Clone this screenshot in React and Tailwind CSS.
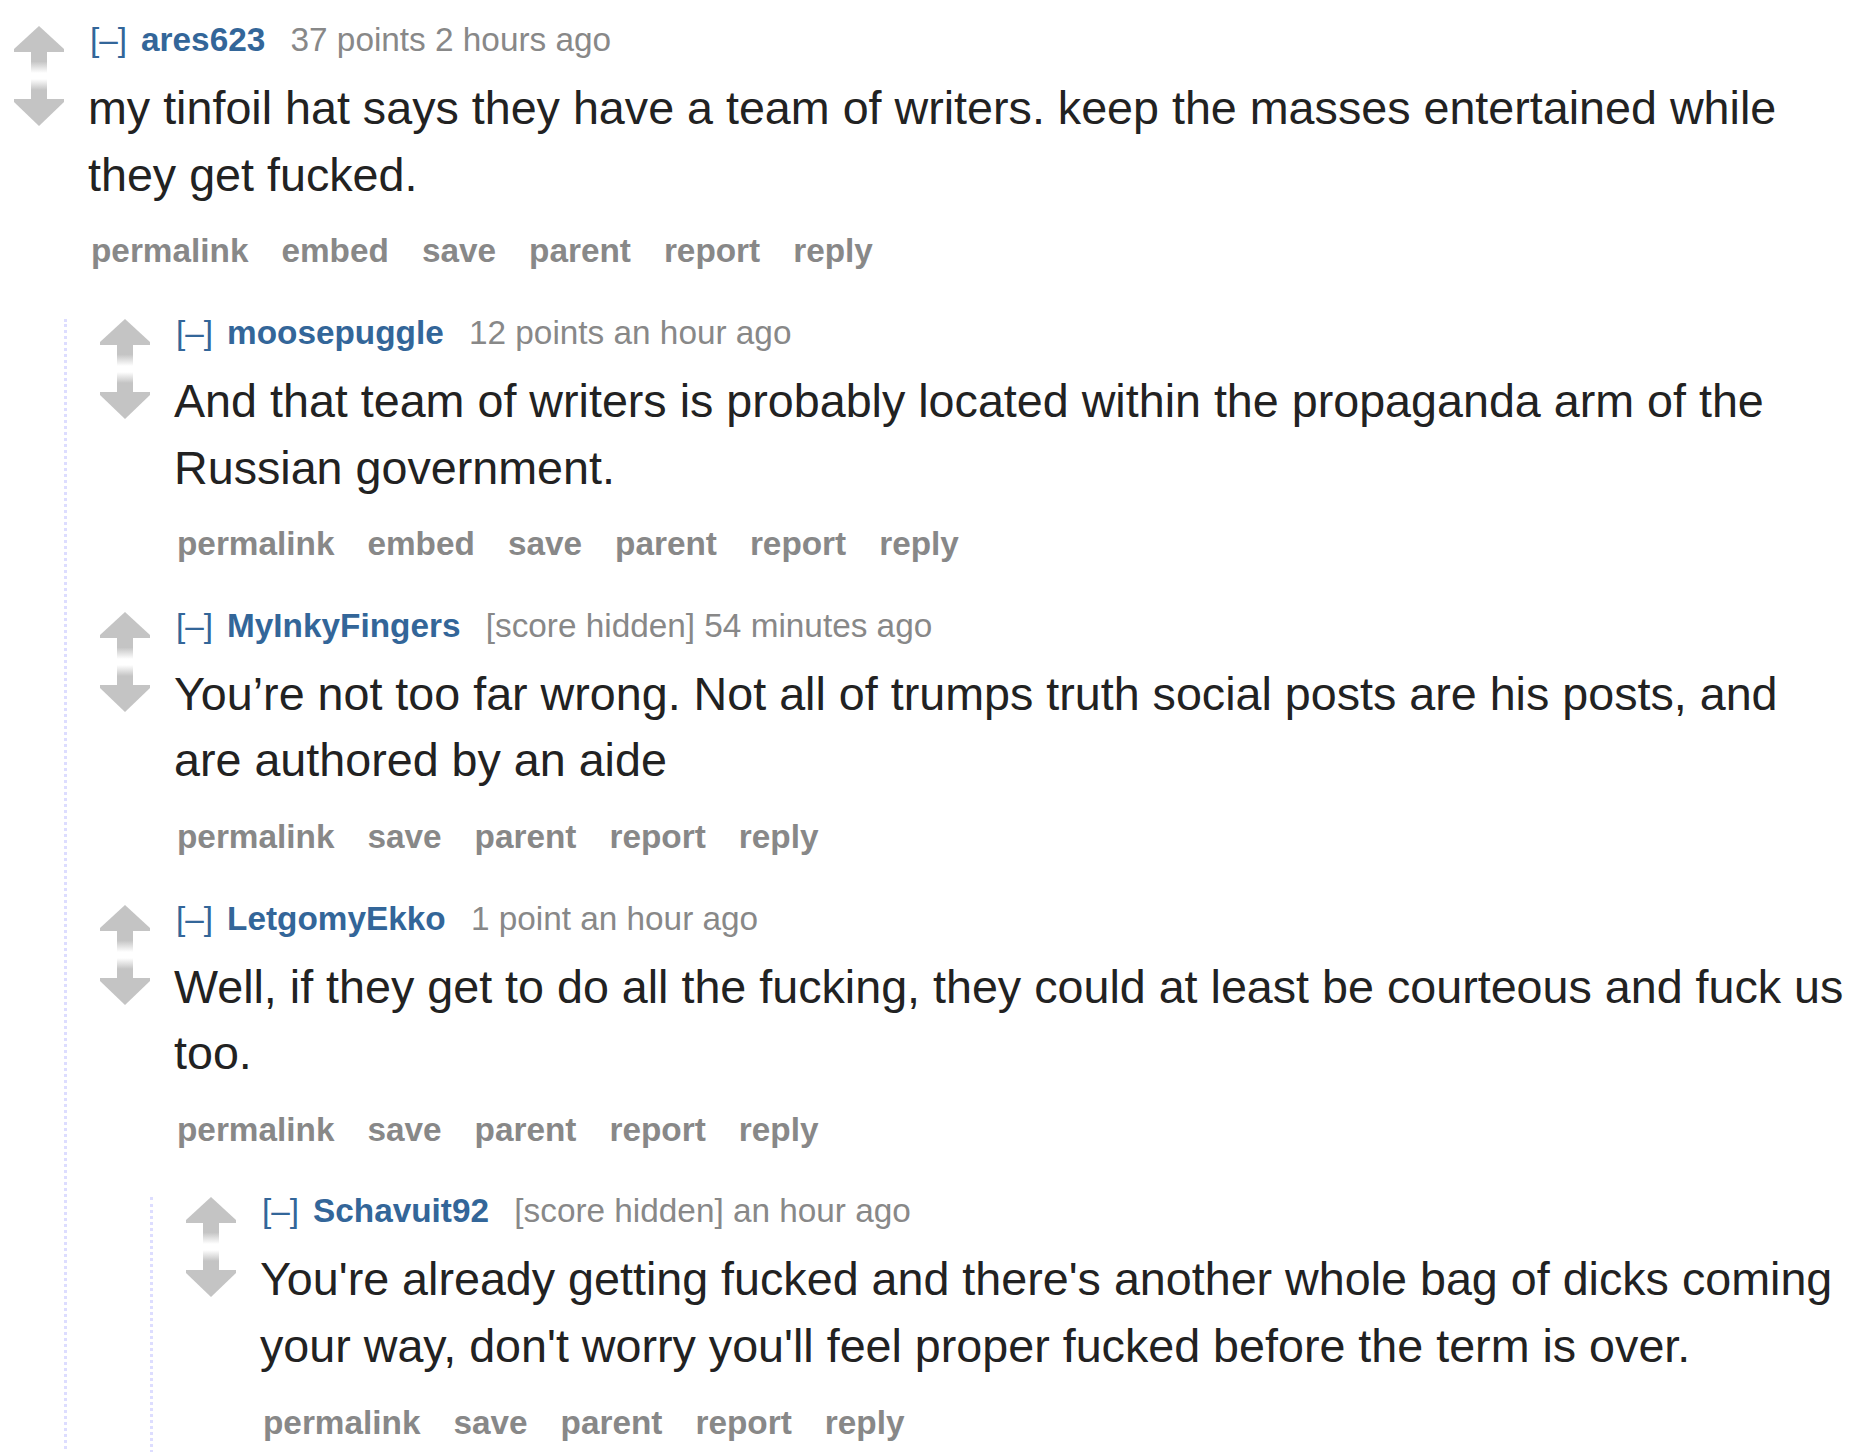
import React from 'react';

const thread = [
  {
    id: 'c1',
    author: 'ares623',
    meta: '37 points 2 hours ago',
    body: 'my tinfoil hat says they have a team of writers. keep the masses entertained while they get fucked.',
    buttons: ['permalink', 'embed', 'save', 'parent', 'report', 'reply'],
    children: [
      {
        id: 'c2',
        author: 'moosepuggle',
        meta: '12 points an hour ago',
        body: 'And that team of writers is probably located within the propaganda arm of the Russian government.',
        buttons: ['permalink', 'embed', 'save', 'parent', 'report', 'reply'],
        children: [],
      },
      {
        id: 'c3',
        author: 'MyInkyFingers',
        meta: '[score hidden] 54 minutes ago',
        body: 'You’re not too far wrong. Not all of trumps truth social posts are his posts, and are authored by an aide',
        buttons: ['permalink', 'save', 'parent', 'report', 'reply'],
        children: [],
      },
      {
        id: 'c4',
        author: 'LetgomyEkko',
        meta: '1 point an hour ago',
        body: 'Well, if they get to do all the fucking, they could at least be courteous and fuck us too.',
        buttons: ['permalink', 'save', 'parent', 'report', 'reply'],
        children: [
          {
            id: 'c5',
            author: 'Schavuit92',
            meta: '[score hidden] an hour ago',
            body: "You're already getting fucked and there's another whole bag of dicks coming your way, don't worry you'll feel proper fucked before the term is over.",
            buttons: ['permalink', 'save', 'parent', 'report', 'reply'],
            children: [],
          },
        ],
      },
    ],
  },
];

const Arrows = () => (
  <svg width="50" height="100" viewBox="0 0 50 100" className="block shrink-0">
    <defs>
      <linearGradient id="shaftUp" x1="0" y1="26" x2="0" y2="47" gradientUnits="userSpaceOnUse">
        <stop offset="0" stopColor="#c4c4c4" />
        <stop offset="0.45" stopColor="#c4c4c4" />
        <stop offset="1" stopColor="#c4c4c4" stopOpacity="0" />
      </linearGradient>
      <linearGradient id="shaftDown" x1="0" y1="53" x2="0" y2="73" gradientUnits="userSpaceOnUse">
        <stop offset="0" stopColor="#c4c4c4" stopOpacity="0" />
        <stop offset="0.55" stopColor="#c4c4c4" />
        <stop offset="1" stopColor="#c4c4c4" />
      </linearGradient>
    </defs>
    <path d="M25 0 L50 23 L50 26 L0 26 L0 23 Z" fill="#c4c4c4" />
    <rect x="17" y="26" width="16" height="21" fill="url(#shaftUp)" />
    <rect x="17" y="53" width="16" height="20" fill="url(#shaftDown)" />
    <path d="M0 73 L50 73 L50 76 L25 100 L0 76 Z" fill="#c4c4c4" />
  </svg>
);

const Comment = ({ c }) => (
  <div>
    <div className="flex items-start pb-[54.5px]">
      <div className="ml-[14px] mr-[26px]">
        <Arrows />
      </div>
      <div className="min-w-0 flex-1">
        <p className="text-[33.33px] leading-[27px] text-[#888] whitespace-nowrap">
          <span className="text-[#369] mr-[14px]">[–]</span>
          <span className="text-[#369] font-bold mr-[16px]">{c.author}</span>{' '}
          {c.meta}
        </p>
        <p className="mt-[22px] ml-[-2px] text-[46.67px] leading-[66.67px] text-[#222]">{c.body}</p>
        <ul className="mt-[29px] flex gap-[32px] text-[33.33px] leading-[27px] font-bold text-[#888]">
          {c.buttons.map((b) => (
            <li key={b} className="pl-px">{b}</li>
          ))}
        </ul>
      </div>
    </div>
    {c.children.length > 0 && (
      <div className="ml-[64px] border-l-[3px] border-dotted border-[#ddf] pl-[19px]">
        {c.children.map((ch) => (
          <Comment key={ch.id} c={ch} />
        ))}
      </div>
    )}
  </div>
);

export default function App() {
  return (
    <div className="bg-white pt-[26px] pr-[6px] font-['Liberation_Sans',Arial,sans-serif]">
      {thread.map((c) => (
        <Comment key={c.id} c={c} />
      ))}
    </div>
  );
}
